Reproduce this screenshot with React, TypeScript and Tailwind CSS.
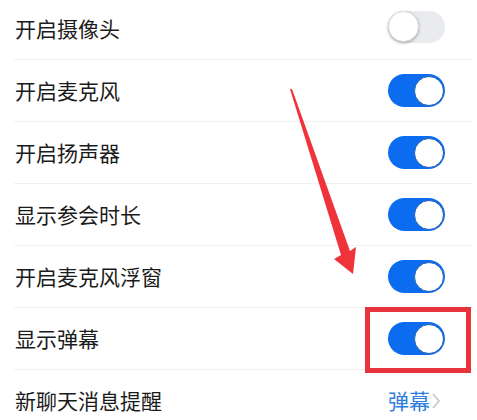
import React from "react";

type Row = { label: string; on?: boolean; link?: string };

const rows: Row[] = [
  { label: "开启摄像头", on: false },
  { label: "开启麦克风", on: true },
  { label: "开启扬声器", on: true },
  { label: "显示参会时长", on: true },
  { label: "开启麦克风浮窗", on: true },
  { label: "显示弹幕", on: true },
  { label: "新聊天消息提醒", link: "弹幕" },
];

function Toggle({ on }: { on: boolean }) {
  if (!on) {
    return (
      <div className="w-[57px] h-[32px] rounded-full bg-[#e9ebef] flex items-center">
        <div className="w-[31px] h-[31px] rounded-full bg-white shadow-[0_1px_3px_rgba(0,0,0,0.3)] border border-[#dcdcdc]" />
      </div>
    );
  }
  return (
    <div className="w-[57px] h-[33px] rounded-full bg-[#0b6cf0] flex items-center justify-end pr-[1px]">
      <div className="w-[30px] h-[30px] rounded-full bg-white border-[1.5px] border-[#1f5cb8]" />
    </div>
  );
}

export default function App() {
  return (
    <div
      className="relative w-[477px] h-[420px] bg-white overflow-hidden"
      style={{ fontFamily: '"Noto Sans CJK SC", "Noto Sans", sans-serif' }}
    >
      <div className="mt-[-2px]">
        {rows.map((r, i) => (
          <div key={r.label} className="flex flex-col">
            <div
              className={
                "h-[61px] flex items-center justify-between pl-[15px] " +
                (r.link ? "pr-[36px]" : "pr-[32px]")
              }
            >
              <span className="text-[21px] text-[#1b1b1b] leading-none">{r.label}</span>
              {r.link ? (
                <span className="flex items-center text-[21px] text-[#2f7de0] leading-none">
                  {r.link}
                  <svg width="10" height="18" viewBox="0 0 10 18" className="ml-[1px]">
                    <path d="M2 2 L8 9 L2 16" fill="none" stroke="#c9c9cd" strokeWidth="1.8" />
                  </svg>
                </span>
              ) : (
                <div className={i === 0 ? "mt-[-4px]" : ""}>
                  <Toggle on={!!r.on} />
                </div>
              )}
            </div>
            <div className="h-px bg-[#f1f1f3] ml-[14px] mr-[5px]" />
          </div>
        ))}
      </div>

      {/* red highlight box */}
      <div className="absolute left-[365px] top-[307px] w-[106px] h-[66px] border-[5px] border-[#e8323c]" />

      {/* arrow */}
      <svg className="absolute left-0 top-0" width="477" height="420" viewBox="0 0 477 420">
        <polygon
          points="290,89 292,89 350,251 356,247 353,274 334,259 341,255"
          fill="#f0323b"
        />
      </svg>
    </div>
  );
}
